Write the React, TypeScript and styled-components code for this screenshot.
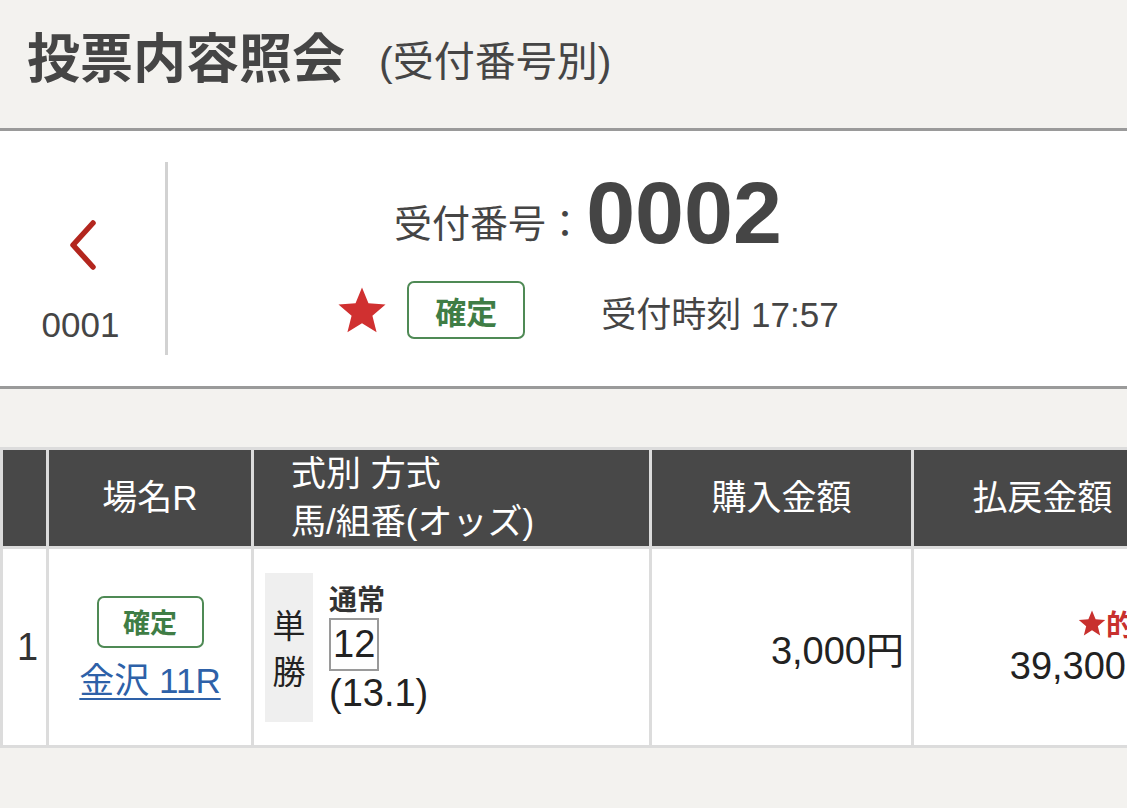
import React from "react";
import styled, { createGlobalStyle } from "styled-components";

const Global = createGlobalStyle`
  html, body { margin: 0; padding: 0; }
  body {
    background: #f3f2ef;
    overflow: hidden;
    font-family: "Liberation Sans", "Noto Sans CJK JP", sans-serif;
    color: #454545;
  }
`;

const Page = styled.div`
  width: 1174px;
  min-height: 808px;
  background: #f3f2ef;
`;

const TitleBar = styled.header`
  display: flex;
  align-items: center;
  padding-left: 27px;
  gap: 34px;
  border-bottom: 3px solid #9a9a9a;
  box-sizing: border-box;
  height: 131px;
`;

const Title = styled.h1`
  margin: 0;
  font-size: 53px;
  font-weight: 700;
  color: #454545;
  line-height: 1;
  margin-top: -10px;
`;

const SubTitle = styled.span`
  font-size: 41px;
  font-weight: 400;
  color: #454545;
  line-height: 1;
  margin-top: -4px;
`;

const Panel = styled.section`
  background: #fff;
  height: 258px;
  box-sizing: border-box;
  border-bottom: 3px solid #9a9a9a;
  display: flex;
  align-items: stretch;
`;

const NavSide = styled.div`
  width: 165px;
  flex: 0 0 165px;
  display: flex;
  flex-direction: column;
  align-items: center;
  padding-top: 87px;
  box-sizing: border-box;
`;

const NavNumber = styled.div`
  font-size: 35px;
  color: #454545;
  margin-top: 35px;
  margin-left: -4px;
  line-height: 1;
`;

const Divider = styled.div`
  width: 3px;
  flex: 0 0 3px;
  background: #d2d2d2;
  margin: 31px 0;
`;

const Center = styled.div`
  flex: 0 0 840px;
  display: flex;
  flex-direction: column;
  align-items: center;
  padding-top: 40px;
  box-sizing: border-box;
`;

const NumberRow = styled.div`
  display: flex;
  align-items: center;
  height: 84px;
`;

const NumberLabel = styled.span`
  font-size: 38px;
  color: #454545;
  margin-top: 14px;
`;

const NumberValue = styled.span`
  font-size: 88px;
  font-weight: 700;
  color: #454545;
  margin-left: 2px;
  line-height: 1;
`;

const StatusRow = styled.div`
  display: flex;
  align-items: center;
  margin-top: 26px;
  height: 58px;
`;

const Badge = styled.span<{ $small?: boolean }>`
  display: inline-flex;
  align-items: center;
  justify-content: center;
  box-sizing: border-box;
  width: ${(p) => (p.$small ? "107px" : "118px")};
  height: ${(p) => (p.$small ? "52px" : "58px")};
  border: 2.5px solid #4f8a55;
  border-radius: 7px;
  color: #3f7d45;
  font-weight: 700;
  font-size: ${(p) => (p.$small ? "27px" : "31px")};
  font-family: "Noto Sans CJK JP", sans-serif;
  line-height: 1;
`;

const Time = styled.span`
  font-size: 35px;
  color: #454545;
  margin-left: 76px;
  margin-top: 2px;
`;

const TableWrap = styled.div`
  padding-top: 58px;
`;

const Table = styled.table`
  width: 1174px;
  table-layout: fixed;
  border-collapse: separate;
  border-spacing: 3px;
  background: #dcdcdc;
`;

const HeadCell = styled.th<{ $align?: string }>`
  background: #484848;
  color: #fff;
  height: 94px;
  padding: 0;
  font-weight: 400;
  font-size: 35px;
  line-height: 48px;
  text-align: ${(p) => p.$align || "center"};
  padding-left: ${(p) => (p.$align === "left" ? "37px" : "0")};
  white-space: nowrap;
  overflow: hidden;
`;

const Cell = styled.td<{ $align?: string }>`
  background: #fff;
  height: 196px;
  padding: 0;
  font-size: 38px;
  color: #222;
  text-align: ${(p) => p.$align || "center"};
  vertical-align: middle;
  white-space: nowrap;
  overflow: hidden;
`;

const IndexCell = styled(Cell)`
  text-align: left;
  padding-left: 14px;
  color: #333;
`;

const VenueStack = styled.div`
  display: flex;
  flex-direction: column;
  align-items: center;
  gap: 14px;
  padding-top: 2px;
`;

const VenueLink = styled.a`
  color: #2e61a8;
  font-size: 35px;
  text-decoration: underline;
  text-underline-offset: 5px;
  text-decoration-thickness: 2px;
  line-height: 1.1;
`;

const BetInner = styled.div`
  display: flex;
  align-items: center;
  gap: 16px;
  padding-left: 11px;
`;

const BetType = styled.div`
  width: 48px;
  height: 149px;
  background: #efefef;
  display: flex;
  flex-direction: column;
  align-items: center;
  justify-content: center;
  font-size: 33px;
  line-height: 46px;
  color: #222;
  font-family: "Noto Sans CJK JP", sans-serif;
`;

const BetDetail = styled.div`
  display: flex;
  flex-direction: column;
  align-items: flex-start;
  text-align: left;
`;

const Method = styled.div`
  font-size: 28px;
  font-weight: 700;
  color: #333;
  line-height: 36px;
  font-family: "Noto Sans CJK JP", sans-serif;
`;

const HorseBox = styled.div`
  border: 2px solid #9a9a9a;
  font-size: 38px;
  line-height: 49px;
  padding: 0 2px;
  color: #222;
  margin-top: 2px;
`;

const Odds = styled.div`
  font-size: 38px;
  line-height: 44px;
  color: #222;
`;

const AmountCell = styled(Cell)`
  text-align: right;
  padding-right: 7px;
`;

const PayoutStack = styled.div`
  display: flex;
  flex-direction: column;
  align-items: flex-end;
  padding-right: 7px;
  margin-top: -2px;
`;

const Hit = styled.div`
  color: #c8302e;
  font-weight: 700;
  font-size: 29px;
  line-height: 40px;
  font-family: "Noto Sans CJK JP", sans-serif;
  display: flex;
  align-items: center;
`;

const Payout = styled.div`
  font-size: 38px;
  line-height: 46px;
  color: #222;
`;

const Chevron = () => (
  <svg width="34" height="54" viewBox="0 0 34 54">
    <polyline
      points="27,5 7,27 27,49"
      fill="none"
      stroke="#b3261e"
      strokeWidth="5.5"
      strokeLinecap="round"
      strokeLinejoin="round"
    />
  </svg>
);

const Star = ({ size, color }: { size: number; color: string }) => (
  <svg width={size} height={size} viewBox="0 0 24 24">
    <path
      d="M12 1.2l3.1 7.6 8.2.6-6.3 5.3 2 8-7-4.4-7 4.4 2-8L.7 9.4l8.2-.6z"
      fill={color}
    />
  </svg>
);

export default function App() {
  return (
    <>
      <Global />
      <Page>
        <TitleBar>
          <Title>投票内容照会</Title>
          <SubTitle>(受付番号別)</SubTitle>
        </TitleBar>
        <Panel>
          <NavSide>
            <Chevron />
            <NavNumber>0001</NavNumber>
          </NavSide>
          <Divider />
          <Center>
            <NumberRow>
              <NumberLabel>受付番号：</NumberLabel>
              <NumberValue>0002</NumberValue>
            </NumberRow>
            <StatusRow>
              <Star size={50} color="#d03030" />
              <Badge style={{ marginLeft: 20 }}>確定</Badge>
              <Time>受付時刻 17:57</Time>
            </StatusRow>
          </Center>
        </Panel>
        <TableWrap>
          <Table>
            <colgroup>
              <col style={{ width: 43 }} />
              <col style={{ width: 202 }} />
              <col style={{ width: 395 }} />
              <col style={{ width: 259 }} />
              <col />
            </colgroup>
            <thead>
              <tr>
                <HeadCell />
                <HeadCell>場名R</HeadCell>
                <HeadCell $align="left">
                  式別 方式
                  <br />
                  馬/組番(オッズ)
                </HeadCell>
                <HeadCell>購入金額</HeadCell>
                <HeadCell>払戻金額</HeadCell>
              </tr>
            </thead>
            <tbody>
              <tr>
                <IndexCell>1</IndexCell>
                <Cell>
                  <VenueStack>
                    <Badge $small>確定</Badge>
                    <VenueLink href="#">金沢 11R</VenueLink>
                  </VenueStack>
                </Cell>
                <Cell $align="left">
                  <BetInner>
                    <BetType>
                      <span>単</span>
                      <span>勝</span>
                    </BetType>
                    <BetDetail>
                      <Method>通常</Method>
                      <HorseBox>12</HorseBox>
                      <Odds>(13.1)</Odds>
                    </BetDetail>
                  </BetInner>
                </Cell>
                <AmountCell>3,000円</AmountCell>
                <Cell>
                  <PayoutStack>
                    <Hit>
                      <Star size={28} color="#c8302e" />
                      的中
                    </Hit>
                    <Payout>39,300円</Payout>
                  </PayoutStack>
                </Cell>
              </tr>
            </tbody>
          </Table>
        </TableWrap>
      </Page>
    </>
  );
}
